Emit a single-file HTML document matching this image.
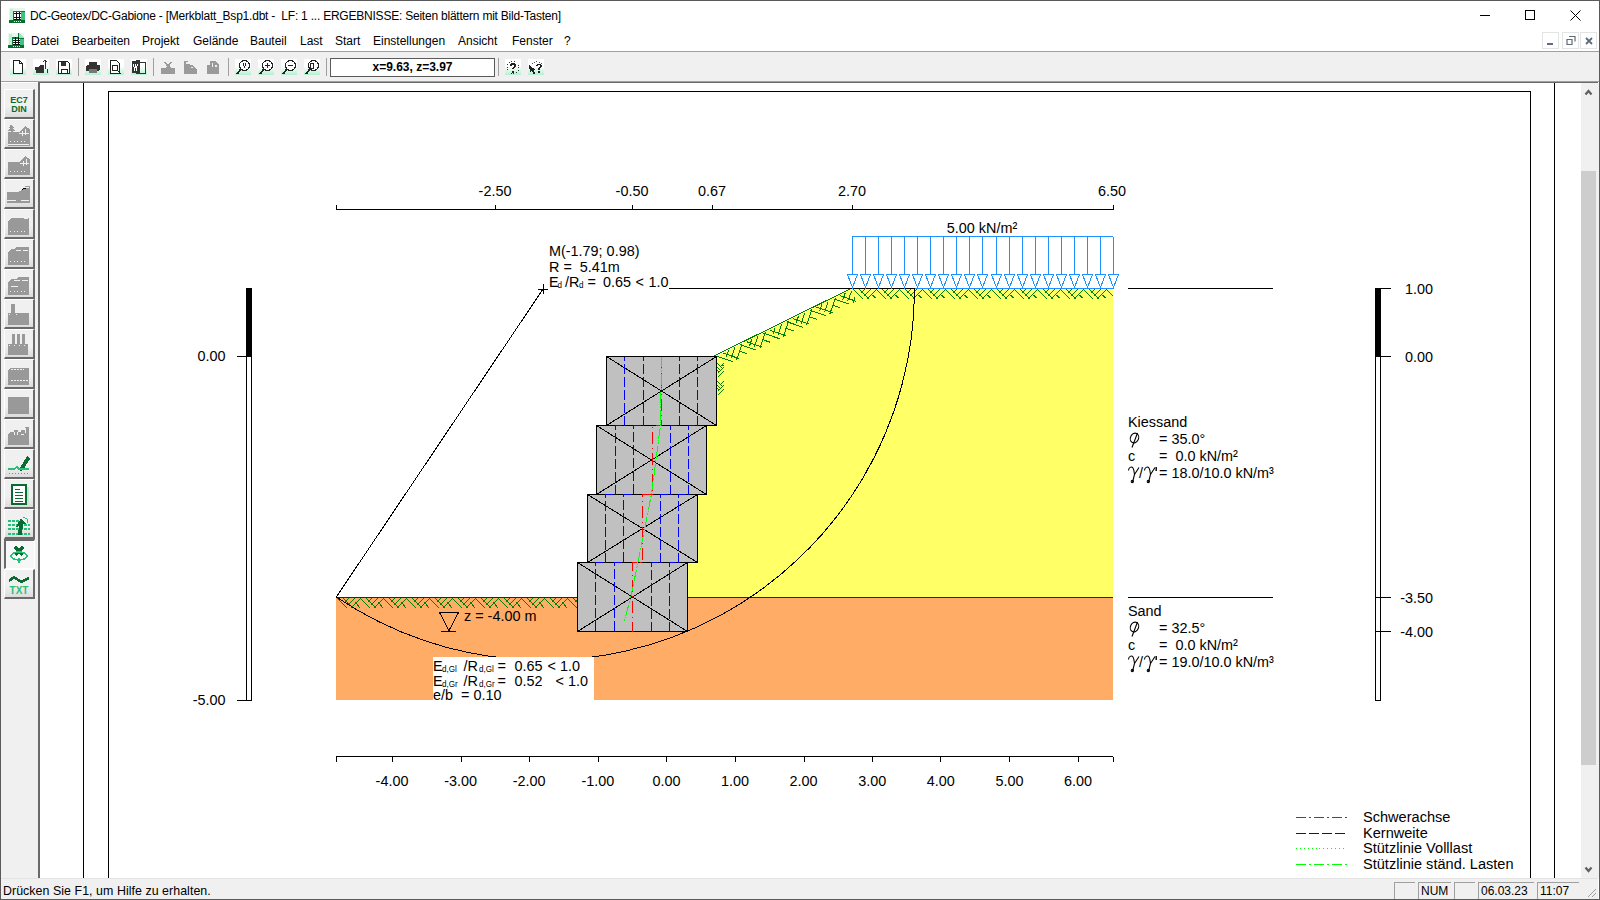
<!DOCTYPE html>
<html><head><meta charset="utf-8"><style>
*{margin:0;padding:0;box-sizing:border-box}
html,body{width:1600px;height:900px;overflow:hidden;background:#fff;font-family:"Liberation Sans", sans-serif}
.abs{position:absolute}
#title{left:30px;top:9px;font-size:12px;color:#000;white-space:pre;letter-spacing:-0.22px}
.menu{top:34px;font-size:12px;color:#000;white-space:pre}
#chart text{font-family:"Liberation Sans", sans-serif;fill:#000;white-space:pre}
</style></head><body>
<div class="abs" style="left:0;top:0;width:1600px;height:900px;border:1px solid #5a5a5a"></div>
<div class="abs" id="title">DC-Geotex/DC-Gabione - [Merkblatt_Bsp1.dbt -  LF: 1 ... ERGEBNISSE: Seiten blättern mit Bild-Tasten]</div>
<svg class="abs" style="left:9px;top:8px" width="17" height="16" viewBox="0 0 17 16" shape-rendering="crispEdges"><rect x="0" y="0" width="16" height="15" fill="#e6f8ee"/><rect x="1" y="1" width="3" height="11" fill="#bfeed3"/><rect x="4" y="3" width="12" height="12" fill="#0b7a3e"/><rect x="5" y="4" width="7" height="8" fill="#fff"/><path d="M5 5.5h7M5 9.5h7M5 11.5h7M7.5 4v9M10.5 4v9" stroke="#111" stroke-width="1"/><rect x="12" y="4" width="4" height="9" fill="#3cc47e"/><rect x="0" y="12" width="16" height="3" fill="#0a6a30"/><path d="M5 13.5h7" stroke="#e6f8ee" stroke-dasharray="1 1"/></svg><svg class="abs" style="left:8px;top:33px" width="17" height="16" viewBox="0 0 17 16" shape-rendering="crispEdges"><rect x="0" y="0" width="16" height="15" fill="#e6f8ee"/><rect x="1" y="1" width="3" height="11" fill="#bfeed3"/><polygon points="4,4 10,4 10,0 11,0 16,5 16,15 4,15" fill="#0b7a3e"/><polygon points="11,0 16,5 11,5" fill="#9fe3bd"/><rect x="5" y="6" width="7" height="8" fill="#fff"/><path d="M5 7.5h7M5 9.5h7M5 11.5h7M7.5 4v9M10.5 4v9" stroke="#111" stroke-width="1"/><rect x="12" y="6" width="4" height="9" fill="#3cc47e"/><rect x="0" y="12" width="16" height="3" fill="#0a6a30"/><path d="M5 13.5h7" stroke="#e6f8ee" stroke-dasharray="1 1"/></svg><div class="abs" style="left:1480px;top:15px;width:10px;height:1px;background:#000"></div><div class="abs" style="left:1525px;top:10px;width:10px;height:10px;border:1px solid #000"></div><svg class="abs" style="left:1570px;top:10px" width="11" height="11" viewBox="0 0 11 11"><path d="M0.5 0.5L10.5 10.5M10.5 0.5L0.5 10.5" stroke="#000" stroke-width="1"/></svg><div class="abs menu" style="left:31px">Datei</div><div class="abs menu" style="left:72px">Bearbeiten</div><div class="abs menu" style="left:142px">Projekt</div><div class="abs menu" style="left:193px">Gelände</div><div class="abs menu" style="left:250px">Bauteil</div><div class="abs menu" style="left:300px">Last</div><div class="abs menu" style="left:335px">Start</div><div class="abs menu" style="left:373px">Einstellungen</div><div class="abs menu" style="left:458px">Ansicht</div><div class="abs menu" style="left:512px">Fenster</div><div class="abs menu" style="left:564px">?</div><div class="abs" style="left:1542px;top:32px;width:17px;height:17px;border:1px solid #e4e4e4;background:#fff"></div><div class="abs" style="left:1562px;top:32px;width:17px;height:17px;border:1px solid #e4e4e4;background:#fff"></div><div class="abs" style="left:1580px;top:32px;width:17px;height:17px;border:1px solid #e4e4e4;background:#fff"></div><div class="abs" style="left:1547px;top:43px;width:6px;height:2px;background:#5d6b7a"></div><svg class="abs" style="left:1566px;top:36px" width="10" height="10" viewBox="0 0 10 10"><path d="M3 0.5h6v5M1 3.5h5v5h-5z" fill="none" stroke="#5d6b7a" stroke-width="1.2"/></svg><svg class="abs" style="left:1585px;top:37px" width="8" height="8" viewBox="0 0 8 8"><path d="M1 1L7 7M7 1L1 7" stroke="#5d6b7a" stroke-width="1.8"/></svg><div class="abs" style="left:1px;top:51px;width:1598px;height:1px;background:#a0a0a0"></div><div class="abs" style="left:1px;top:52px;width:1598px;height:29px;background:#f0f0f0"></div><div class="abs" style="left:1px;top:81px;width:1598px;height:1px;background:#a0a0a0"></div><div class="abs" style="left:1px;top:82px;width:37px;height:1px;background:#fff"></div><div class="abs" style="left:38px;top:82px;width:1560px;height:1px;background:#696969"></div><svg class="abs" style="left:10px;top:59px" width="16" height="16" viewBox="0 0 16 16" shape-rendering="crispEdges"><defs><linearGradient id="tbg" x1="0" y1="0" x2="0" y2="1"><stop offset="0.45" stop-color="#fff"/><stop offset="1" stop-color="#b4f0d2"/></linearGradient></defs><rect x="0" y="0" width="16" height="16" fill="url(#tbg)"/><path d="M3.5 1.5h6l3 3v10h-9z" fill="#fff" stroke="#222"/><path d="M9.5 1.5v3h3" fill="none" stroke="#222"/></svg><svg class="abs" style="left:33px;top:59px" width="16" height="16" viewBox="0 0 16 16" shape-rendering="crispEdges"><defs><linearGradient id="tbg" x1="0" y1="0" x2="0" y2="1"><stop offset="0.45" stop-color="#fff"/><stop offset="1" stop-color="#b4f0d2"/></linearGradient></defs><rect x="0" y="0" width="16" height="16" fill="url(#tbg)"/><path d="M2 8h4l1-2h4v8H3z" fill="#333"/><path d="M12 1v9M10 3l2-2 2 2M14 10v4" stroke="#333" fill="none"/></svg><svg class="abs" style="left:56px;top:59px" width="16" height="16" viewBox="0 0 16 16" shape-rendering="crispEdges"><defs><linearGradient id="tbg" x1="0" y1="0" x2="0" y2="1"><stop offset="0.45" stop-color="#fff"/><stop offset="1" stop-color="#b4f0d2"/></linearGradient></defs><rect x="0" y="0" width="16" height="16" fill="url(#tbg)"/><path d="M2.5 2.5h9l2 2v10h-11z" fill="#fff" stroke="#222"/><rect x="5" y="3" width="5" height="4" fill="#333"/><rect x="5" y="10" width="6" height="4" fill="#fff" stroke="#222"/></svg><div class="abs" style="left:78px;top:58px;width:1px;height:18px;background:#a0a0a0"></div><svg class="abs" style="left:85px;top:59px" width="16" height="16" viewBox="0 0 16 16" shape-rendering="crispEdges"><defs><linearGradient id="tbg" x1="0" y1="0" x2="0" y2="1"><stop offset="0.45" stop-color="#fff"/><stop offset="1" stop-color="#b4f0d2"/></linearGradient></defs><rect x="0" y="0" width="16" height="16" fill="url(#tbg)"/><rect x="1" y="6" width="14" height="6" rx="2" fill="#333"/><rect x="4" y="3" width="8" height="3" fill="#333"/><rect x="4" y="10" width="8" height="4" fill="#777"/></svg><svg class="abs" style="left:108px;top:59px" width="16" height="16" viewBox="0 0 16 16" shape-rendering="crispEdges"><defs><linearGradient id="tbg" x1="0" y1="0" x2="0" y2="1"><stop offset="0.45" stop-color="#fff"/><stop offset="1" stop-color="#b4f0d2"/></linearGradient></defs><rect x="0" y="0" width="16" height="16" fill="url(#tbg)"/><path d="M2.5 1.5h6l3 3v10h-9z" fill="#fff" stroke="#222"/><circle cx="7" cy="9" r="3" fill="none" stroke="#222"/><path d="M9 11l4 4" stroke="#222"/></svg><svg class="abs" style="left:131px;top:59px" width="16" height="16" viewBox="0 0 16 16" shape-rendering="crispEdges"><defs><linearGradient id="tbg" x1="0" y1="0" x2="0" y2="1"><stop offset="0.45" stop-color="#fff"/><stop offset="1" stop-color="#b4f0d2"/></linearGradient></defs><rect x="0" y="0" width="16" height="16" fill="url(#tbg)"/><path d="M1 2l8-1v14l-8-1z" fill="#333"/><path d="M9 3h5v11H9" fill="none" stroke="#333"/><path d="M2.5 5l1 5 1-3 1 3 1-5" stroke="#fff" fill="none"/></svg><div class="abs" style="left:153px;top:58px;width:1px;height:18px;background:#a0a0a0"></div><svg class="abs" style="left:160px;top:59px" width="16" height="16" viewBox="0 0 16 16" shape-rendering="crispEdges"><path d="M1 9h4l2-2h2l2 2h4v6H1z" fill="#9a9a9a"/><path d="M5 3l2 3h2l2-3" stroke="#9a9a9a" fill="none" stroke-width="1.5"/></svg><svg class="abs" style="left:183px;top:59px" width="16" height="16" viewBox="0 0 16 16" shape-rendering="crispEdges"><path d="M1 2h4v3l4 1 5 4v5H1z" fill="#9a9a9a"/><rect x="3" y="3" width="2" height="2" fill="#eee"/><rect x="8" y="8" width="2" height="1" fill="#eee"/></svg><svg class="abs" style="left:206px;top:59px" width="16" height="16" viewBox="0 0 16 16" shape-rendering="crispEdges"><path d="M1 6h3V2h6l3 4v9H1z" fill="#9a9a9a"/><rect x="6" y="4" width="1" height="4" fill="#eee"/><rect x="9" y="6" width="2" height="2" fill="#eee"/></svg><div class="abs" style="left:228px;top:58px;width:1px;height:18px;background:#a0a0a0"></div><svg class="abs" style="left:235px;top:59px" width="16" height="16" viewBox="0 0 16 16" shape-rendering="crispEdges"><defs><linearGradient id="tbg" x1="0" y1="0" x2="0" y2="1"><stop offset="0.45" stop-color="#fff"/><stop offset="1" stop-color="#b4f0d2"/></linearGradient></defs><rect x="0" y="0" width="16" height="16" fill="url(#tbg)"/><circle cx="9.5" cy="6.5" r="5" fill="#fff" stroke="#222"/><path d="M6 10l-4 5" stroke="#222" stroke-width="2"/><path d="M8 4l1.5 4 1.5-4" stroke="#222" fill="none"/></svg><svg class="abs" style="left:258px;top:59px" width="16" height="16" viewBox="0 0 16 16" shape-rendering="crispEdges"><defs><linearGradient id="tbg" x1="0" y1="0" x2="0" y2="1"><stop offset="0.45" stop-color="#fff"/><stop offset="1" stop-color="#b4f0d2"/></linearGradient></defs><rect x="0" y="0" width="16" height="16" fill="url(#tbg)"/><circle cx="9.5" cy="6.5" r="5" fill="#fff" stroke="#222"/><path d="M6 10l-4 5" stroke="#222" stroke-width="2"/><path d="M9.5 4v5M7 6.5h5" stroke="#222" stroke-width="1.5"/></svg><svg class="abs" style="left:281px;top:59px" width="16" height="16" viewBox="0 0 16 16" shape-rendering="crispEdges"><defs><linearGradient id="tbg" x1="0" y1="0" x2="0" y2="1"><stop offset="0.45" stop-color="#fff"/><stop offset="1" stop-color="#b4f0d2"/></linearGradient></defs><rect x="0" y="0" width="16" height="16" fill="url(#tbg)"/><circle cx="9.5" cy="6.5" r="5" fill="#fff" stroke="#222"/><path d="M6 10l-4 5" stroke="#222" stroke-width="2"/><path d="M7 6.5h5" stroke="#222" stroke-width="1.5"/></svg><svg class="abs" style="left:304px;top:59px" width="16" height="16" viewBox="0 0 16 16" shape-rendering="crispEdges"><defs><linearGradient id="tbg" x1="0" y1="0" x2="0" y2="1"><stop offset="0.45" stop-color="#fff"/><stop offset="1" stop-color="#b4f0d2"/></linearGradient></defs><rect x="0" y="0" width="16" height="16" fill="url(#tbg)"/><circle cx="9.5" cy="6.5" r="5" fill="#fff" stroke="#222"/><path d="M6 10l-4 5" stroke="#222" stroke-width="2"/><rect x="6" y="4" width="3" height="5" fill="none" stroke="#222"/></svg><div class="abs" style="left:326px;top:58px;width:1px;height:18px;background:#a0a0a0"></div><div class="abs" style="left:330px;top:58px;width:165px;height:19px;background:#fff;border:1px solid #5a5a5a;font-weight:bold;font-size:12px;text-align:center;line-height:17px">x=9.63, z=3.97</div><div class="abs" style="left:498px;top:58px;width:1px;height:18px;background:#a0a0a0"></div><svg class="abs" style="left:505px;top:59px" width="16" height="16" viewBox="0 0 16 16" shape-rendering="crispEdges"><defs><linearGradient id="tbg" x1="0" y1="0" x2="0" y2="1"><stop offset="0.45" stop-color="#fff"/><stop offset="1" stop-color="#b4f0d2"/></linearGradient></defs><rect x="0" y="0" width="16" height="16" fill="url(#tbg)"/><circle cx="8" cy="8.5" r="6" fill="none" stroke="#333" stroke-dasharray="1 1.6"/><path d="M6 6.5C6 4.5 10 4.5 10 6.5C10 8 8 8.5 8 10" fill="none" stroke="#222" stroke-width="1.6"/><rect x="7" y="11.5" width="2" height="2" fill="#222"/></svg><svg class="abs" style="left:528px;top:59px" width="16" height="16" viewBox="0 0 16 16" shape-rendering="crispEdges"><defs><linearGradient id="tbg" x1="0" y1="0" x2="0" y2="1"><stop offset="0.45" stop-color="#fff"/><stop offset="1" stop-color="#b4f0d2"/></linearGradient></defs><rect x="0" y="0" width="16" height="16" fill="url(#tbg)"/><path d="M4 5C7 2 12 2 14 5" fill="none" stroke="#555" stroke-dasharray="1 1.5"/><path d="M9 7C9 5 13 5 13 7C13 8.5 11 9 11 10.5" fill="none" stroke="#222" stroke-width="1.6"/><rect x="10" y="12" width="2" height="2" fill="#222"/><path d="M1 6L8 11L5.5 11.5L7.5 15L6 15.5L4 12L2 13.5Z" fill="#222"/></svg><div class="abs" style="left:1px;top:83px;width:37px;height:795px;background:#f0f0f0"></div><div class="abs" style="left:38px;top:82px;width:2px;height:796px;background:#696969"></div><div class="abs" style="left:4px;top:89px;width:31px;height:30px;background:linear-gradient(#f0f0f0,#f0f0f0 60%,#dcdcdc);border-top:1px solid #fff;border-left:1px solid #fff;border-bottom:2px solid #6a6a6a;border-right:2px solid #6a6a6a"></div><div class="abs" style="left:4px;top:119px;width:31px;height:30px;background:linear-gradient(#f0f0f0,#f0f0f0 60%,#dcdcdc);border-top:1px solid #fff;border-left:1px solid #fff;border-bottom:2px solid #6a6a6a;border-right:2px solid #6a6a6a"></div><div class="abs" style="left:4px;top:149px;width:31px;height:30px;background:linear-gradient(#f0f0f0,#f0f0f0 60%,#dcdcdc);border-top:1px solid #fff;border-left:1px solid #fff;border-bottom:2px solid #6a6a6a;border-right:2px solid #6a6a6a"></div><div class="abs" style="left:4px;top:179px;width:31px;height:30px;background:linear-gradient(#f0f0f0,#f0f0f0 60%,#dcdcdc);border-top:1px solid #fff;border-left:1px solid #fff;border-bottom:2px solid #6a6a6a;border-right:2px solid #6a6a6a"></div><div class="abs" style="left:4px;top:209px;width:31px;height:30px;background:linear-gradient(#f0f0f0,#f0f0f0 60%,#dcdcdc);border-top:1px solid #fff;border-left:1px solid #fff;border-bottom:2px solid #6a6a6a;border-right:2px solid #6a6a6a"></div><div class="abs" style="left:4px;top:239px;width:31px;height:30px;background:linear-gradient(#f0f0f0,#f0f0f0 60%,#dcdcdc);border-top:1px solid #fff;border-left:1px solid #fff;border-bottom:2px solid #6a6a6a;border-right:2px solid #6a6a6a"></div><div class="abs" style="left:4px;top:269px;width:31px;height:30px;background:linear-gradient(#f0f0f0,#f0f0f0 60%,#dcdcdc);border-top:1px solid #fff;border-left:1px solid #fff;border-bottom:2px solid #6a6a6a;border-right:2px solid #6a6a6a"></div><div class="abs" style="left:4px;top:299px;width:31px;height:30px;background:linear-gradient(#f0f0f0,#f0f0f0 60%,#dcdcdc);border-top:1px solid #fff;border-left:1px solid #fff;border-bottom:2px solid #6a6a6a;border-right:2px solid #6a6a6a"></div><div class="abs" style="left:4px;top:329px;width:31px;height:30px;background:linear-gradient(#f0f0f0,#f0f0f0 60%,#dcdcdc);border-top:1px solid #fff;border-left:1px solid #fff;border-bottom:2px solid #6a6a6a;border-right:2px solid #6a6a6a"></div><div class="abs" style="left:4px;top:359px;width:31px;height:30px;background:linear-gradient(#f0f0f0,#f0f0f0 60%,#dcdcdc);border-top:1px solid #fff;border-left:1px solid #fff;border-bottom:2px solid #6a6a6a;border-right:2px solid #6a6a6a"></div><div class="abs" style="left:4px;top:389px;width:31px;height:30px;background:linear-gradient(#f0f0f0,#f0f0f0 60%,#dcdcdc);border-top:1px solid #fff;border-left:1px solid #fff;border-bottom:2px solid #6a6a6a;border-right:2px solid #6a6a6a"></div><div class="abs" style="left:4px;top:419px;width:31px;height:30px;background:linear-gradient(#f0f0f0,#f0f0f0 60%,#dcdcdc);border-top:1px solid #fff;border-left:1px solid #fff;border-bottom:2px solid #6a6a6a;border-right:2px solid #6a6a6a"></div><div class="abs" style="left:4px;top:449px;width:31px;height:30px;background:linear-gradient(#f0f0f0,#f0f0f0 60%,#dcdcdc);border-top:1px solid #fff;border-left:1px solid #fff;border-bottom:2px solid #6a6a6a;border-right:2px solid #6a6a6a"></div><div class="abs" style="left:4px;top:479px;width:31px;height:30px;background:linear-gradient(#f0f0f0,#f0f0f0 60%,#dcdcdc);border-top:1px solid #fff;border-left:1px solid #fff;border-bottom:2px solid #6a6a6a;border-right:2px solid #6a6a6a"></div><div class="abs" style="left:4px;top:509px;width:31px;height:30px;background:linear-gradient(#f0f0f0,#f0f0f0 60%,#dcdcdc);border-top:1px solid #fff;border-left:1px solid #fff;border-bottom:2px solid #6a6a6a;border-right:2px solid #6a6a6a"></div><div class="abs" style="left:4px;top:539px;width:31px;height:30px;background:#f7f7f7;border-top:2px solid #6a6a6a;border-left:2px solid #6a6a6a;border-bottom:1px solid #fff;border-right:1px solid #fff"></div><div class="abs" style="left:4px;top:569px;width:31px;height:30px;background:linear-gradient(#f0f0f0,#f0f0f0 60%,#dcdcdc);border-top:1px solid #fff;border-left:1px solid #fff;border-bottom:2px solid #6a6a6a;border-right:2px solid #6a6a6a"></div><svg class="abs" style="left:7px;top:94px" width="24" height="22" viewBox="0 0 24 22" shape-rendering="crispEdges"><text x="12" y="9" font-size="9" font-weight="bold" text-anchor="middle" font-family="Liberation Sans" fill="#0a6a30">EC7</text><text x="12" y="18" font-size="9" font-weight="bold" text-anchor="middle" font-family="Liberation Sans" fill="#0a6a30">DIN</text></svg><svg class="abs" style="left:7px;top:124px" width="24" height="22" viewBox="0 0 24 22" shape-rendering="crispEdges"><path d="M4 0l3 4H6l2 3H1l2-3H2z" fill="#999"/><rect x="4" y="7" width="2" height="2" fill="#999"/><path d="M1 8h11l4-4 2-2 3 2 2 1v17H1z" fill="#999"/><path d="M12 9.5h10M15 7v5M18 5v6" stroke="#f0f0f0"/><path d="M3 17.5h18" stroke="#f0f0f0" stroke-dasharray="1 2.5"/><rect x="1" y="20" width="21" height="1" fill="#f0f0f0"/></svg><svg class="abs" style="left:7px;top:154px" width="24" height="22" viewBox="0 0 24 22" shape-rendering="crispEdges"><path d="M1 8h11l4-4 2-2 3 2 2 1v16H1z" fill="#999"/><path d="M13 9.5h9M16 7v5M19 5v6" stroke="#f0f0f0"/><path d="M3 17.5h18" stroke="#f0f0f0" stroke-dasharray="1 2.5"/></svg><svg class="abs" style="left:7px;top:184px" width="24" height="22" viewBox="0 0 24 22" shape-rendering="crispEdges"><path d="M0 8h11l3-2 5-4h4v17H0z" fill="#999"/><path d="M13 7l4-4h5M0 16.5h9M14 16.5h8" stroke="#f0f0f0"/></svg><svg class="abs" style="left:7px;top:214px" width="24" height="22" viewBox="0 0 24 22" shape-rendering="crispEdges"><path d="M1 8l3-4h18v17H1z" fill="#999"/><path d="M17 4.5h4" stroke="#f0f0f0"/><path d="M3 17.5h18" stroke="#f0f0f0" stroke-dasharray="1 2.5"/></svg><svg class="abs" style="left:7px;top:244px" width="24" height="22" viewBox="0 0 24 22" shape-rendering="crispEdges"><path d="M1 8l3-3h3l2-2h13v18H1z" fill="#999"/><path d="M9 6.5h5M16 6.5h5" stroke="#f0f0f0"/><path d="M3 17.5h18" stroke="#f0f0f0" stroke-dasharray="1 2.5"/></svg><svg class="abs" style="left:7px;top:274px" width="24" height="22" viewBox="0 0 24 22" shape-rendering="crispEdges"><path d="M1 9l3-4h5l2-2h11v18H1z" fill="#999"/><path d="M7 6.5h6M15 6.5h6M4 12.5h7" stroke="#f0f0f0"/><path d="M3 17.5h18" stroke="#f0f0f0" stroke-dasharray="1 2.5"/></svg><svg class="abs" style="left:7px;top:304px" width="24" height="22" viewBox="0 0 24 22" shape-rendering="crispEdges"><rect x="4" y="0" width="4" height="10" fill="#999"/><rect x="1" y="9" width="21" height="12" fill="#999"/><path d="M2 10.5h1M9 10.5h1" stroke="#f0f0f0"/></svg><svg class="abs" style="left:7px;top:334px" width="24" height="22" viewBox="0 0 24 22" shape-rendering="crispEdges"><path d="M1 10h4V0h3v10h2V0h3v10h2V0h3v10h3v11H1z" fill="#999"/><path d="M2 11.5h20" stroke="#f0f0f0" stroke-dasharray="1 4"/></svg><svg class="abs" style="left:7px;top:364px" width="24" height="22" viewBox="0 0 24 22" shape-rendering="crispEdges"><path d="M1 7l2-3h19v17H1z" fill="#999"/><path d="M4 5.5h13M4 16.5h18" stroke="#f0f0f0" stroke-dasharray="2 1"/></svg><svg class="abs" style="left:7px;top:394px" width="24" height="22" viewBox="0 0 24 22" shape-rendering="crispEdges"><rect x="1" y="3" width="21" height="17" fill="#999"/></svg><svg class="abs" style="left:7px;top:424px" width="24" height="22" viewBox="0 0 24 22" shape-rendering="crispEdges"><path d="M1 10l3-2h3V6h4v2h3v-2h4V3h4v18H1z" fill="#999"/><path d="M7 8v3M10 8v3M18 4v5M14 10.5h3" stroke="#f0f0f0"/></svg><svg class="abs" style="left:7px;top:454px" width="24" height="22" viewBox="0 0 24 22" shape-rendering="crispEdges"><path d="M13 14l7-12 2 1 1 2-7 11-3 1z" fill="#0a6a30"/><path d="M1 15h6l3-2 2 2h10" stroke="#27c07a" fill="none" stroke-width="1.5"/><path d="M2 19.5h20" stroke="#27c07a" stroke-dasharray="1 2"/></svg><svg class="abs" style="left:7px;top:484px" width="24" height="22" viewBox="0 0 24 22" shape-rendering="crispEdges"><rect x="5" y="1" width="14" height="19" fill="#fff" stroke="#0a6a30" stroke-width="2"/><path d="M8 5h5M8 8h8M8 11h8M8 14h8M8 17h8" stroke="#0a6a30"/><rect x="20" y="3" width="2" height="18" fill="#bfe8cf"/></svg><svg class="abs" style="left:7px;top:514px" width="24" height="22" viewBox="0 0 24 22" shape-rendering="crispEdges"><path d="M1 7h12M1 11h22M1 15h22M1 20h22" stroke="#27c07a" stroke-width="1.5" stroke-dasharray="3 1"/><path d="M11 21l1-9-3 1 5-9 5 6-3 0-1 11z" fill="#0a6a30"/><path d="M16 3l4 2v4" stroke="#27c07a" fill="none"/></svg><svg class="abs" style="left:7px;top:544px" width="24" height="22" viewBox="0 0 24 22" shape-rendering="crispEdges"><path d="M8 3l8 8M16 3l-8 8" stroke="#0a6a30" stroke-width="3"/><ellipse cx="12" cy="12" rx="8" ry="4" fill="none" stroke="#27c07a" stroke-width="1.5"/><path d="M12 14v5" stroke="#27c07a" stroke-width="1.5"/></svg><svg class="abs" style="left:7px;top:574px" width="24" height="22" viewBox="0 0 24 22" shape-rendering="crispEdges"><path d="M2 7l5-4 7 5 8-4" stroke="#0a6a30" stroke-width="2.5" fill="none"/><text x="12" y="20" font-size="10" font-weight="bold" text-anchor="middle" font-family="Liberation Sans" fill="#27c07a">TXT</text></svg><div class="abs" style="left:83px;top:83px;width:1px;height:795px;background:#000"></div><div class="abs" style="left:108px;top:91px;width:1423px;height:800px;border:1px solid #000;border-bottom:none"></div><div class="abs" style="left:1554px;top:83px;width:1px;height:795px;background:#000"></div><div class="abs" style="left:1581px;top:83px;width:16px;height:795px;background:#f0f0f0"></div><div class="abs" style="left:1581px;top:171px;width:15px;height:594px;background:#cdcdcd"></div><svg class="abs" style="left:1583px;top:88px" width="11" height="8" viewBox="0 0 11 8"><path d="M2.5 6.5L5.5 3L8.5 6.5" stroke="#606060" stroke-width="2.2" fill="none"/></svg><svg class="abs" style="left:1583px;top:866px" width="11" height="8" viewBox="0 0 11 8"><path d="M2.5 1.5L5.5 5L8.5 1.5" stroke="#606060" stroke-width="2.2" fill="none"/></svg><div class="abs" style="left:1597px;top:83px;width:2px;height:795px;background:#f0f0f0"></div><div class="abs" style="left:1px;top:878px;width:1597px;height:21px;background:#f0f0f0;border-top:1px solid #e3e3e3"></div><div class="abs" style="left:3px;top:884px;font-size:12.4px;color:#000;white-space:pre;letter-spacing:0.05px">Drücken Sie F1, um Hilfe zu erhalten.</div><div class="abs" style="left:1394px;top:882px;width:21px;height:17px;border-top:1px solid #a0a0a0;border-left:1px solid #a0a0a0;font-size:12px;line-height:16px;padding-left:2px;white-space:pre"></div><div class="abs" style="left:1418px;top:882px;width:33px;height:17px;border-top:1px solid #a0a0a0;border-left:1px solid #a0a0a0;font-size:12px;line-height:16px;padding-left:2px;white-space:pre">NUM</div><div class="abs" style="left:1454px;top:882px;width:21px;height:17px;border-top:1px solid #a0a0a0;border-left:1px solid #a0a0a0;font-size:12px;line-height:16px;padding-left:2px;white-space:pre"></div><div class="abs" style="left:1478px;top:882px;width:56px;height:17px;border-top:1px solid #a0a0a0;border-left:1px solid #a0a0a0;font-size:12px;line-height:16px;padding-left:2px;white-space:pre">06.03.23</div><div class="abs" style="left:1537px;top:882px;width:42px;height:17px;border-top:1px solid #a0a0a0;border-left:1px solid #a0a0a0;font-size:12px;line-height:16px;padding-left:2px;white-space:pre">11:07</div><svg class="abs" style="left:1585px;top:886px" width="12" height="12" viewBox="0 0 12 12"><path d="M11 3L3 11M11 7L7 11" stroke="#a0a0a0" stroke-width="1"/></svg><svg id="chart" class="abs" style="left:0;top:0" width="1600" height="900" viewBox="0 0 1600 900" shape-rendering="crispEdges"><polygon points="687.5,597 687.5,562 697,562 697,494 706,494 706,425 716,425 716,356 852,288 1113,288 1113,597" fill="#ffff66"/><rect x="336" y="597" width="777" height="103" fill="#ffad66"/><line x1="336" y1="597.5" x2="577" y2="597.5" stroke="#800000" stroke-width="1" /><line x1="688" y1="597.5" x2="1113" y2="597.5" stroke="#800000" stroke-width="1" /><path d="M337.5 598.5L347.5 608.5M343.5 598.5L353.5 608.5M348.5 598.5L344.5 602.5M354.5 598.5L347.5 605.5M360.5 598.5L350.5 608.5M355.5 602.5L360.5 608.5M360.5 598.5L370.5 608.5M366.5 598.5L376.5 608.5M371.5 598.5L367.5 602.5M377.5 598.5L370.5 605.5M383.5 598.5L373.5 608.5M378.5 602.5L383.5 608.5M383.5 598.5L393.5 608.5M389.5 598.5L399.5 608.5M394.5 598.5L390.5 602.5M400.5 598.5L393.5 605.5M406.5 598.5L396.5 608.5M401.5 602.5L406.5 608.5M406.5 598.5L416.5 608.5M412.5 598.5L422.5 608.5M417.5 598.5L413.5 602.5M423.5 598.5L416.5 605.5M429.5 598.5L419.5 608.5M424.5 602.5L429.5 608.5M429.5 598.5L439.5 608.5M435.5 598.5L445.5 608.5M440.5 598.5L436.5 602.5M446.5 598.5L439.5 605.5M452.5 598.5L442.5 608.5M447.5 602.5L452.5 608.5M452.5 598.5L462.5 608.5M458.5 598.5L468.5 608.5M463.5 598.5L459.5 602.5M469.5 598.5L462.5 605.5M475.5 598.5L465.5 608.5M470.5 602.5L475.5 608.5M475.5 598.5L485.5 608.5M481.5 598.5L491.5 608.5M486.5 598.5L482.5 602.5M492.5 598.5L485.5 605.5M498.5 598.5L488.5 608.5M493.5 602.5L498.5 608.5M498.5 598.5L508.5 608.5M504.5 598.5L514.5 608.5M509.5 598.5L505.5 602.5M515.5 598.5L508.5 605.5M521.5 598.5L511.5 608.5M516.5 602.5L521.5 608.5M521.5 598.5L531.5 608.5M527.5 598.5L537.5 608.5M532.5 598.5L528.5 602.5M538.5 598.5L531.5 605.5M544.5 598.5L534.5 608.5M539.5 602.5L544.5 608.5M544.5 598.5L554.5 608.5M550.5 598.5L560.5 608.5M555.5 598.5L551.5 602.5M561.5 598.5L554.5 605.5M567.5 598.5L557.5 608.5M562.5 602.5L567.5 608.5M567.5 598.5L577.5 608.5M573.5 598.5L577.5 602.5M577.5 599.5L574.5 602.5" stroke="#008000" stroke-width="1" fill="none"/><path d="M853.5 289.5L863.5 299.5M859.5 289.5L869.5 299.5M864.5 289.5L860.5 293.5M870.5 289.5L863.5 296.5M876.5 289.5L866.5 299.5M871.5 294.5L876.5 298.5M876.5 289.5L886.5 299.5M882.5 289.5L892.5 299.5M887.5 289.5L883.5 293.5M893.5 289.5L886.5 296.5M899.5 289.5L889.5 299.5M894.5 294.5L899.5 298.5M899.5 289.5L909.5 299.5M905.5 289.5L915.5 299.5M910.5 289.5L906.5 293.5M916.5 289.5L909.5 296.5M922.5 289.5L912.5 299.5M917.5 294.5L922.5 298.5M922.5 289.5L932.5 299.5M928.5 289.5L938.5 299.5M933.5 289.5L929.5 293.5M939.5 289.5L932.5 296.5M945.5 289.5L935.5 299.5M940.5 294.5L945.5 298.5M945.5 289.5L955.5 299.5M951.5 289.5L961.5 299.5M956.5 289.5L952.5 293.5M962.5 289.5L955.5 296.5M968.5 289.5L958.5 299.5M963.5 294.5L968.5 298.5M968.5 289.5L978.5 299.5M974.5 289.5L984.5 299.5M979.5 289.5L975.5 293.5M985.5 289.5L978.5 296.5M991.5 289.5L981.5 299.5M986.5 294.5L991.5 298.5M991.5 289.5L1001.5 299.5M997.5 289.5L1007.5 299.5M1002.5 289.5L998.5 293.5M1008.5 289.5L1001.5 296.5M1014.5 289.5L1004.5 299.5M1009.5 294.5L1014.5 298.5M1014.5 289.5L1024.5 299.5M1020.5 289.5L1030.5 299.5M1025.5 289.5L1021.5 293.5M1031.5 289.5L1024.5 296.5M1037.5 289.5L1027.5 299.5M1032.5 294.5L1037.5 298.5M1037.5 289.5L1047.5 299.5M1043.5 289.5L1053.5 299.5M1048.5 289.5L1044.5 293.5M1054.5 289.5L1047.5 296.5M1060.5 289.5L1050.5 299.5M1055.5 294.5L1060.5 298.5M1060.5 289.5L1070.5 299.5M1066.5 289.5L1076.5 299.5M1071.5 289.5L1067.5 293.5M1077.5 289.5L1070.5 296.5M1083.5 289.5L1073.5 299.5M1078.5 294.5L1083.5 298.5M1083.5 289.5L1093.5 299.5M1089.5 289.5L1099.5 299.5M1094.5 289.5L1090.5 293.5M1100.5 289.5L1093.5 296.5M1106.5 289.5L1096.5 299.5M1101.5 294.5L1106.5 298.5M1106.5 289.5L1113.5 296.5" stroke="#008000" stroke-width="1" fill="none"/><g transform="translate(714,356) rotate(-26.232)"><path d="M2.5 11.5L4.5 12.5M2.5 1.5L14.5 13.5M9.5 1.5L21.5 13.5M15.5 1.5L10.5 6.5M22.5 1.5L14.5 9.5M30.5 1.5L18.5 13.5M24.5 6.5L30.5 12.5M28.5 1.5L40.5 13.5M35.5 1.5L47.5 13.5M41.5 1.5L36.5 6.5M48.5 1.5L40.5 9.5M56.5 1.5L44.5 13.5M50.5 6.5L56.5 12.5M54.5 1.5L66.5 13.5M61.5 1.5L73.5 13.5M67.5 1.5L62.5 6.5M74.5 1.5L66.5 9.5M82.5 1.5L70.5 13.5M76.5 6.5L82.5 12.5M80.5 1.5L92.5 13.5M87.5 1.5L99.5 13.5M93.5 1.5L88.5 6.5M100.5 1.5L92.5 9.5M108.5 1.5L96.5 13.5M102.5 6.5L108.5 12.5M106.5 1.5L118.5 13.5M113.5 1.5L125.5 13.5M119.5 1.5L114.5 6.5M126.5 1.5L118.5 9.5M134.5 1.5L122.5 13.5M128.5 6.5L134.5 12.5M132.5 1.5L144.5 13.5M139.5 1.5L151.5 13.5M145.5 1.5L140.5 6.5M152.5 2.5L144.5 9.5M152.5 9.5L148.5 13.5" stroke="#008000" stroke-width="1" fill="none"/></g><line x1="714" y1="356" x2="852" y2="288" stroke="#008000" stroke-width="1" /><g transform="translate(717,396) rotate(-90)"><path d="M0.5 0.5L6.5 6.5M4.5 0.5L10.5 6.5M7.5 0.5L4.5 2.5M10.5 0.5L6.5 4.5M14.5 0.5L8.5 6.5M11.5 3.5L14.5 6.5M18.5 0.5L24.5 6.5M22.5 0.5L28.5 6.5M25.5 0.5L22.5 2.5M28.5 0.5L24.5 4.5M32.5 0.5L26.5 6.5M29.5 3.5L32.5 6.5" stroke="#008000" stroke-width="1" fill="none"/></g><line x1="669" y1="288.5" x2="852" y2="288.5" stroke="#000" stroke-width="1" /><line x1="852" y1="288.5" x2="915" y2="288.5" stroke="#000" stroke-width="1" /><rect x="606" y="356" width="111" height="70" fill="#c0c0c0"/><rect x="596" y="425" width="111" height="70" fill="#c0c0c0"/><rect x="587" y="494" width="111" height="69" fill="#c0c0c0"/><rect x="577" y="562" width="111" height="70" fill="#c0c0c0"/><path d="M606.5 356.5L716.5 425.5M606.5 425.5L716.5 356.5" stroke="#000" stroke-width="1"/><rect x="606.5" y="356.5" width="110.0" height="69.0" fill="none" stroke="#000" stroke-width="1.2"/><path d="M596.5 425.5L706.5 494.5M596.5 494.5L706.5 425.5" stroke="#000" stroke-width="1"/><rect x="596.5" y="425.5" width="110.0" height="69.0" fill="none" stroke="#000" stroke-width="1.2"/><path d="M587.5 494.5L697.5 562.5M587.5 562.5L697.5 494.5" stroke="#000" stroke-width="1"/><rect x="587.5" y="494.5" width="110.0" height="68.0" fill="none" stroke="#000" stroke-width="1.2"/><path d="M577.5 562.5L687.5 631.5M577.5 631.5L687.5 562.5" stroke="#000" stroke-width="1"/><rect x="577.5" y="562.5" width="110.0" height="69.0" fill="none" stroke="#000" stroke-width="1.2"/><path d="M624.5 356.5 L624.5 425.5 L615.5 425.5 L615.5 494.5 L605.5 494.5 L605.5 562.5 L595.5 562.5 L595.5 631.5" fill="none" stroke="#0000ff" stroke-width="1" stroke-dasharray="10 3" stroke-dashoffset="6"/><path d="M643.5 356.5 L643.5 425.5 L633.5 425.5 L633.5 494.5 L623.5 494.5 L623.5 562.5 L614.5 562.5 L614.5 631.5" fill="none" stroke="#0000ff" stroke-width="1" stroke-dasharray="10 3" stroke-dashoffset="6"/><path d="M679.5 356.5 L679.5 425.5 L670.5 425.5 L670.5 494.5 L660.5 494.5 L660.5 562.5 L651.5 562.5 L651.5 631.5" fill="none" stroke="#0000ff" stroke-width="1" stroke-dasharray="10 3" stroke-dashoffset="6"/><path d="M697.5 356.5 L697.5 425.5 L688.5 425.5 L688.5 494.5 L678.5 494.5 L678.5 562.5 L669.5 562.5 L669.5 631.5" fill="none" stroke="#0000ff" stroke-width="1" stroke-dasharray="10 3" stroke-dashoffset="6"/><path d="M661.5 356.5 L661.5 425.5 L652.5 425.5 L652.5 494.5 L642.5 494.5 L642.5 562.5 L632.5 562.5 L632.5 631.5" fill="none" stroke="#ff0000" stroke-width="1" stroke-dasharray="12 4 1.5 3.5"/><polyline points="661.5,357 660.5,425 651.5,494 638,562 631,596 624,623" fill="none" stroke="#00ff00" stroke-width="1" stroke-dasharray="10 3 2 3"/><polyline points="661.5,357 660.5,425 651.5,494 638,562 631,596 624,623" fill="none" stroke="#00ff00" stroke-width="1" stroke-dasharray="1 2" stroke-dashoffset="1"/><path d="M336.3 597 A371.0 371.0 0 0 0 914.5 288.5" fill="none" stroke="#000" stroke-width="1"/><line x1="543.2" y1="288.8" x2="336.3" y2="597" stroke="#000" stroke-width="1" /><line x1="538.2" y1="289.5" x2="548.2" y2="289.5" stroke="#000" stroke-width="1" /><line x1="543.5" y1="284" x2="543.5" y2="294" stroke="#000" stroke-width="1" /><line x1="852" y1="236.5" x2="1113" y2="236.5" stroke="#1e90ff" stroke-width="1" /><line x1="852.5" y1="236.5" x2="852.5" y2="274" stroke="#1e90ff" stroke-width="1" /><polyline points="847.5,274.5 857.5,274.5 852.5,287.5 847.5,274.5" fill="none" stroke="#1e90ff" stroke-width="1"/><line x1="865.5" y1="236.5" x2="865.5" y2="274" stroke="#1e90ff" stroke-width="1" /><polyline points="860.5,274.5 870.5,274.5 865.5,287.5 860.5,274.5" fill="none" stroke="#1e90ff" stroke-width="1"/><line x1="878.5" y1="236.5" x2="878.5" y2="274" stroke="#1e90ff" stroke-width="1" /><polyline points="873.5,274.5 883.5,274.5 878.5,287.5 873.5,274.5" fill="none" stroke="#1e90ff" stroke-width="1"/><line x1="891.5" y1="236.5" x2="891.5" y2="274" stroke="#1e90ff" stroke-width="1" /><polyline points="886.5,274.5 896.5,274.5 891.5,287.5 886.5,274.5" fill="none" stroke="#1e90ff" stroke-width="1"/><line x1="904.5" y1="236.5" x2="904.5" y2="274" stroke="#1e90ff" stroke-width="1" /><polyline points="899.5,274.5 909.5,274.5 904.5,287.5 899.5,274.5" fill="none" stroke="#1e90ff" stroke-width="1"/><line x1="917.5" y1="236.5" x2="917.5" y2="274" stroke="#1e90ff" stroke-width="1" /><polyline points="912.5,274.5 922.5,274.5 917.5,287.5 912.5,274.5" fill="none" stroke="#1e90ff" stroke-width="1"/><line x1="930.5" y1="236.5" x2="930.5" y2="274" stroke="#1e90ff" stroke-width="1" /><polyline points="925.5,274.5 935.5,274.5 930.5,287.5 925.5,274.5" fill="none" stroke="#1e90ff" stroke-width="1"/><line x1="943.5" y1="236.5" x2="943.5" y2="274" stroke="#1e90ff" stroke-width="1" /><polyline points="938.5,274.5 948.5,274.5 943.5,287.5 938.5,274.5" fill="none" stroke="#1e90ff" stroke-width="1"/><line x1="956.5" y1="236.5" x2="956.5" y2="274" stroke="#1e90ff" stroke-width="1" /><polyline points="951.5,274.5 961.5,274.5 956.5,287.5 951.5,274.5" fill="none" stroke="#1e90ff" stroke-width="1"/><line x1="969.5" y1="236.5" x2="969.5" y2="274" stroke="#1e90ff" stroke-width="1" /><polyline points="964.5,274.5 974.5,274.5 969.5,287.5 964.5,274.5" fill="none" stroke="#1e90ff" stroke-width="1"/><line x1="982.5" y1="236.5" x2="982.5" y2="274" stroke="#1e90ff" stroke-width="1" /><polyline points="977.5,274.5 987.5,274.5 982.5,287.5 977.5,274.5" fill="none" stroke="#1e90ff" stroke-width="1"/><line x1="996.5" y1="236.5" x2="996.5" y2="274" stroke="#1e90ff" stroke-width="1" /><polyline points="991.5,274.5 1001.5,274.5 996.5,287.5 991.5,274.5" fill="none" stroke="#1e90ff" stroke-width="1"/><line x1="1009.5" y1="236.5" x2="1009.5" y2="274" stroke="#1e90ff" stroke-width="1" /><polyline points="1004.5,274.5 1014.5,274.5 1009.5,287.5 1004.5,274.5" fill="none" stroke="#1e90ff" stroke-width="1"/><line x1="1022.5" y1="236.5" x2="1022.5" y2="274" stroke="#1e90ff" stroke-width="1" /><polyline points="1017.5,274.5 1027.5,274.5 1022.5,287.5 1017.5,274.5" fill="none" stroke="#1e90ff" stroke-width="1"/><line x1="1035.5" y1="236.5" x2="1035.5" y2="274" stroke="#1e90ff" stroke-width="1" /><polyline points="1030.5,274.5 1040.5,274.5 1035.5,287.5 1030.5,274.5" fill="none" stroke="#1e90ff" stroke-width="1"/><line x1="1048.5" y1="236.5" x2="1048.5" y2="274" stroke="#1e90ff" stroke-width="1" /><polyline points="1043.5,274.5 1053.5,274.5 1048.5,287.5 1043.5,274.5" fill="none" stroke="#1e90ff" stroke-width="1"/><line x1="1061.5" y1="236.5" x2="1061.5" y2="274" stroke="#1e90ff" stroke-width="1" /><polyline points="1056.5,274.5 1066.5,274.5 1061.5,287.5 1056.5,274.5" fill="none" stroke="#1e90ff" stroke-width="1"/><line x1="1074.5" y1="236.5" x2="1074.5" y2="274" stroke="#1e90ff" stroke-width="1" /><polyline points="1069.5,274.5 1079.5,274.5 1074.5,287.5 1069.5,274.5" fill="none" stroke="#1e90ff" stroke-width="1"/><line x1="1087.5" y1="236.5" x2="1087.5" y2="274" stroke="#1e90ff" stroke-width="1" /><polyline points="1082.5,274.5 1092.5,274.5 1087.5,287.5 1082.5,274.5" fill="none" stroke="#1e90ff" stroke-width="1"/><line x1="1100.5" y1="236.5" x2="1100.5" y2="274" stroke="#1e90ff" stroke-width="1" /><polyline points="1095.5,274.5 1105.5,274.5 1100.5,287.5 1095.5,274.5" fill="none" stroke="#1e90ff" stroke-width="1"/><line x1="1113.5" y1="236.5" x2="1113.5" y2="274" stroke="#1e90ff" stroke-width="1" /><polyline points="1108.5,274.5 1118.5,274.5 1113.5,287.5 1108.5,274.5" fill="none" stroke="#1e90ff" stroke-width="1"/><line x1="915" y1="288.5" x2="1113" y2="288.5" stroke="#1e90ff" stroke-width="1" /><line x1="336" y1="209.5" x2="1113" y2="209.5" stroke="#000" stroke-width="1" /><line x1="336.5" y1="205" x2="336.5" y2="210" stroke="#000" stroke-width="1" /><line x1="495.5" y1="205" x2="495.5" y2="210" stroke="#000" stroke-width="1" /><line x1="632.5" y1="205" x2="632.5" y2="210" stroke="#000" stroke-width="1" /><line x1="712.5" y1="205" x2="712.5" y2="210" stroke="#000" stroke-width="1" /><line x1="852.5" y1="205" x2="852.5" y2="210" stroke="#000" stroke-width="1" /><line x1="1113.5" y1="205" x2="1113.5" y2="210" stroke="#000" stroke-width="1" /><text transform="translate(495 196) scale(0.93 1)" font-size="15.5" text-anchor="middle" >-2.50</text><text transform="translate(632 196) scale(0.93 1)" font-size="15.5" text-anchor="middle" >-0.50</text><text transform="translate(712 196) scale(0.93 1)" font-size="15.5" text-anchor="middle" >0.67</text><text transform="translate(852 196) scale(0.93 1)" font-size="15.5" text-anchor="middle" >2.70</text><text transform="translate(1112 196) scale(0.93 1)" font-size="15.5" text-anchor="middle" >6.50</text><text transform="translate(982 233) scale(0.93 1)" font-size="15.5" text-anchor="middle" >5.00 kN/m²</text><line x1="336" y1="756.5" x2="1113" y2="756.5" stroke="#000" stroke-width="1" /><line x1="336.5" y1="757" x2="336.5" y2="762" stroke="#000" stroke-width="1" /><line x1="392.5" y1="757" x2="392.5" y2="762" stroke="#000" stroke-width="1" /><line x1="461.5" y1="757" x2="461.5" y2="762" stroke="#000" stroke-width="1" /><line x1="529.5" y1="757" x2="529.5" y2="762" stroke="#000" stroke-width="1" /><line x1="598.5" y1="757" x2="598.5" y2="762" stroke="#000" stroke-width="1" /><line x1="666.5" y1="757" x2="666.5" y2="762" stroke="#000" stroke-width="1" /><line x1="735.5" y1="757" x2="735.5" y2="762" stroke="#000" stroke-width="1" /><line x1="804.5" y1="757" x2="804.5" y2="762" stroke="#000" stroke-width="1" /><line x1="872.5" y1="757" x2="872.5" y2="762" stroke="#000" stroke-width="1" /><line x1="940.5" y1="757" x2="940.5" y2="762" stroke="#000" stroke-width="1" /><line x1="1009.5" y1="757" x2="1009.5" y2="762" stroke="#000" stroke-width="1" /><line x1="1078.5" y1="757" x2="1078.5" y2="762" stroke="#000" stroke-width="1" /><line x1="1113.5" y1="757" x2="1113.5" y2="762" stroke="#000" stroke-width="1" /><text transform="translate(392.0 786) scale(0.93 1)" font-size="15.5" text-anchor="middle" >-4.00</text><text transform="translate(460.6 786) scale(0.93 1)" font-size="15.5" text-anchor="middle" >-3.00</text><text transform="translate(529.2 786) scale(0.93 1)" font-size="15.5" text-anchor="middle" >-2.00</text><text transform="translate(597.8 786) scale(0.93 1)" font-size="15.5" text-anchor="middle" >-1.00</text><text transform="translate(666.4 786) scale(0.93 1)" font-size="15.5" text-anchor="middle" >0.00</text><text transform="translate(735.0 786) scale(0.93 1)" font-size="15.5" text-anchor="middle" >1.00</text><text transform="translate(803.5999999999999 786) scale(0.93 1)" font-size="15.5" text-anchor="middle" >2.00</text><text transform="translate(872.1999999999999 786) scale(0.93 1)" font-size="15.5" text-anchor="middle" >3.00</text><text transform="translate(940.8 786) scale(0.93 1)" font-size="15.5" text-anchor="middle" >4.00</text><text transform="translate(1009.4 786) scale(0.93 1)" font-size="15.5" text-anchor="middle" >5.00</text><text transform="translate(1078.0 786) scale(0.93 1)" font-size="15.5" text-anchor="middle" >6.00</text><rect x="246.5" y="288.5" width="5" height="412" fill="#fff" stroke="#000"/><rect x="246" y="288" width="6" height="69" fill="#000"/><line x1="237" y1="356.5" x2="246" y2="356.5" stroke="#000" stroke-width="1" /><line x1="237" y1="700.5" x2="246" y2="700.5" stroke="#000" stroke-width="1" /><text transform="translate(225.5 361) scale(0.93 1)" font-size="15.5" text-anchor="end" >0.00</text><text transform="translate(225.5 705) scale(0.93 1)" font-size="15.5" text-anchor="end" >-5.00</text><rect x="1375.5" y="288.5" width="5" height="412" fill="#fff" stroke="#000"/><rect x="1375" y="288" width="6" height="69" fill="#000"/><line x1="1375" y1="288.5" x2="1391" y2="288.5" stroke="#000" stroke-width="1" /><text transform="translate(1433 293.5) scale(0.93 1)" font-size="15.5" text-anchor="end" >1.00</text><line x1="1375" y1="356.5" x2="1391" y2="356.5" stroke="#000" stroke-width="1" /><text transform="translate(1433 361.5) scale(0.93 1)" font-size="15.5" text-anchor="end" >0.00</text><line x1="1375" y1="597.5" x2="1391" y2="597.5" stroke="#000" stroke-width="1" /><text transform="translate(1433 602.5) scale(0.93 1)" font-size="15.5" text-anchor="end" >-3.50</text><line x1="1375" y1="631.5" x2="1391" y2="631.5" stroke="#000" stroke-width="1" /><text transform="translate(1433 636.5) scale(0.93 1)" font-size="15.5" text-anchor="end" >-4.00</text><line x1="1128" y1="288.5" x2="1273" y2="288.5" stroke="#000" stroke-width="1" /><line x1="1128" y1="597.5" x2="1273" y2="597.5" stroke="#000" stroke-width="1" /><text transform="translate(1128 427) scale(0.93 1)" font-size="15.5" text-anchor="start" >Kiessand</text><g transform="translate(1128 432.5)" fill="none" stroke="#000" stroke-width="1.1" shape-rendering="auto"><ellipse cx="6.5" cy="5.5" rx="4" ry="5" transform="rotate(25 6.5 5.5)"/><path d="M9.5 0.5L4 15"/></g><text transform="translate(1159 444) scale(0.93 1)" font-size="15.5" text-anchor="start" >= 35.0°</text><text transform="translate(1128 460.5) scale(0.93 1)" font-size="15.5" text-anchor="start" >c</text><text transform="translate(1159 460.5) scale(0.93 1)" font-size="15.5" text-anchor="start" >=  0.0 kN/m²</text><g transform="translate(1128 466.5)" fill="none" stroke="#000" stroke-width="1.1" shape-rendering="auto"><path d="M0.5 4C0.5 1 3.5 -0.5 5 1.5C6 3 6.2 6 6.5 8L4.5 16M11 1L6.5 8"/><circle cx="4.3" cy="15" r="1.1"/></g><g transform="translate(1144 466.5)" fill="none" stroke="#000" stroke-width="1.1" shape-rendering="auto"><path d="M0.5 4C0.5 1 3.5 -0.5 5 1.5C6 3 6.2 6 6.5 8L4.5 16M11 1L6.5 8"/><circle cx="4.3" cy="15" r="1.1"/></g><text transform="translate(1139 477.5) scale(0.93 1)" font-size="15.5" text-anchor="start" >/</text><rect x="1155.5" y="467.0" width="1.4" height="4" fill="#000" shape-rendering="auto"/><text transform="translate(1159 477.5) scale(0.93 1)" font-size="15.5" text-anchor="start" >= 18.0/10.0 kN/m³</text><text transform="translate(1128 616) scale(0.93 1)" font-size="15.5" text-anchor="start" >Sand</text><g transform="translate(1128 621.5)" fill="none" stroke="#000" stroke-width="1.1" shape-rendering="auto"><ellipse cx="6.5" cy="5.5" rx="4" ry="5" transform="rotate(25 6.5 5.5)"/><path d="M9.5 0.5L4 15"/></g><text transform="translate(1159 633) scale(0.93 1)" font-size="15.5" text-anchor="start" >= 32.5°</text><text transform="translate(1128 649.5) scale(0.93 1)" font-size="15.5" text-anchor="start" >c</text><text transform="translate(1159 649.5) scale(0.93 1)" font-size="15.5" text-anchor="start" >=  0.0 kN/m²</text><g transform="translate(1128 655.5)" fill="none" stroke="#000" stroke-width="1.1" shape-rendering="auto"><path d="M0.5 4C0.5 1 3.5 -0.5 5 1.5C6 3 6.2 6 6.5 8L4.5 16M11 1L6.5 8"/><circle cx="4.3" cy="15" r="1.1"/></g><g transform="translate(1144 655.5)" fill="none" stroke="#000" stroke-width="1.1" shape-rendering="auto"><path d="M0.5 4C0.5 1 3.5 -0.5 5 1.5C6 3 6.2 6 6.5 8L4.5 16M11 1L6.5 8"/><circle cx="4.3" cy="15" r="1.1"/></g><text transform="translate(1139 666.5) scale(0.93 1)" font-size="15.5" text-anchor="start" >/</text><rect x="1155.5" y="656.0" width="1.4" height="4" fill="#000" shape-rendering="auto"/><text transform="translate(1159 666.5) scale(0.93 1)" font-size="15.5" text-anchor="start" >= 19.0/10.0 kN/m³</text><text transform="translate(549 256) scale(0.93 1)" font-size="15.5" text-anchor="start" >M(-1.79; 0.98)</text><text transform="translate(549 271.5) scale(0.93 1)" font-size="15.5" text-anchor="start" >R =  5.41m</text><text transform="translate(549 286.5) scale(0.93 1)" font-size="15.5" text-anchor="start" >E</text><text transform="translate(557.5 287.5) scale(0.95 1)" font-size="8.5">d</text><text transform="translate(565 286.5) scale(0.93 1)" font-size="15.5" text-anchor="start" >/R</text><text transform="translate(579 287.5) scale(0.95 1)" font-size="8.5">d</text><text transform="translate(587.5 286.5) scale(0.93 1)" font-size="15.5" text-anchor="start" >=</text><text transform="translate(603 286.5) scale(0.93 1)" font-size="15.5" text-anchor="start" >0.65</text><text transform="translate(635.5 286.5) scale(0.93 1)" font-size="15.5" text-anchor="start" >&lt;</text><text transform="translate(648.5 286.5) scale(0.93 1)" font-size="15.5" text-anchor="start" >1.0</text><polyline points="439.5,612.5 458.5,612.5 449,630.5 439.5,612.5" fill="none" stroke="#000"/><line x1="441" y1="631.5" x2="456" y2="631.5" stroke="#000" stroke-width="1" /><text transform="translate(464 621) scale(0.93 1)" font-size="15.5" text-anchor="start" >z = -4.00 m</text><rect x="433" y="657" width="161" height="43" fill="#fff"/><text transform="translate(433 671) scale(0.93 1)" font-size="15.5" text-anchor="start" >E</text><text transform="translate(442 671.5) scale(0.95 1)" font-size="8.5">d,Gl</text><text transform="translate(463.5 671) scale(0.93 1)" font-size="15.5" text-anchor="start" >/R</text><text transform="translate(479 671.5) scale(0.95 1)" font-size="8.5">d,Gl</text><text transform="translate(497.5 671) scale(0.93 1)" font-size="15.5" text-anchor="start" >=</text><text transform="translate(514.5 671) scale(0.93 1)" font-size="15.5" text-anchor="start" >0.65</text><text transform="translate(547.5 671) scale(0.93 1)" font-size="15.5" text-anchor="start" >&lt;</text><text transform="translate(560 671) scale(0.93 1)" font-size="15.5" text-anchor="start" >1.0</text><text transform="translate(433 686) scale(0.93 1)" font-size="15.5" text-anchor="start" >E</text><text transform="translate(442 686.5) scale(0.95 1)" font-size="8.5">d,Gr</text><text transform="translate(463.5 686) scale(0.93 1)" font-size="15.5" text-anchor="start" >/R</text><text transform="translate(479 686.5) scale(0.95 1)" font-size="8.5">d,Gr</text><text transform="translate(497.5 686) scale(0.93 1)" font-size="15.5" text-anchor="start" >=</text><text transform="translate(514.5 686) scale(0.93 1)" font-size="15.5" text-anchor="start" >0.52</text><text transform="translate(555.5 686) scale(0.93 1)" font-size="15.5" text-anchor="start" >&lt;</text><text transform="translate(568 686) scale(0.93 1)" font-size="15.5" text-anchor="start" >1.0</text><text transform="translate(433 700) scale(0.93 1)" font-size="15.5" text-anchor="start" >e/b  = 0.10</text><line x1="1296" y1="817.5" x2="1347" y2="817.5" stroke="#ff0000" stroke-width="1" stroke-dasharray="10 3 2 3"/><line x1="1296" y1="833.5" x2="1346" y2="833.5" stroke="#0000ff" stroke-width="1" stroke-dasharray="10 3"/><line x1="1296" y1="848.5" x2="1347" y2="848.5" stroke="#00ff00" stroke-width="1" stroke-dasharray="1 2.9"/><line x1="1296" y1="864.5" x2="1347" y2="864.5" stroke="#00ff00" stroke-width="1" stroke-dasharray="10 3 2 3"/><text transform="translate(1363 822) scale(0.94 1)" font-size="15.5">Schwerachse</text><text transform="translate(1363 837.5) scale(0.94 1)" font-size="15.5">Kernweite</text><text transform="translate(1363 853) scale(0.94 1)" font-size="15.5">Stützlinie Volllast</text><text transform="translate(1363 868.5) scale(0.94 1)" font-size="15.5">Stützlinie ständ. Lasten</text></svg></body></html>
